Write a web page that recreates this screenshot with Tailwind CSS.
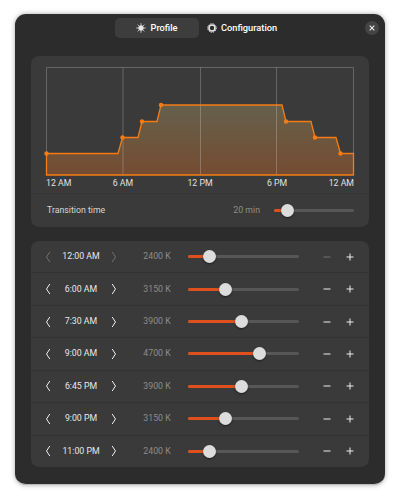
<!DOCTYPE html>
<html lang="en">
<head>
    <meta charset="UTF-8">
    <title>Profile</title>
    <script src="https://cdn.jsdelivr.net/npm/@tailwindcss/browser@4"></script>
</head>
<body class="bg-white w-[400px] h-[500px] overflow-hidden font-['Roboto',sans-serif]">
<div class="ml-[15px] mt-[14px] w-[370px] h-[471px] bg-[#2c2c2c] rounded-[11px] border-b border-[#bbb] shadow-[0_0_5px_rgba(0,0,0,0.35)] px-4 flex flex-col">

    <!-- header -->
    <div class="relative h-[42px] shrink-0 flex items-start justify-center pt-1 text-white text-[9.25px] font-medium">
        <div class="w-[84px] h-5 ml-[-1px] rounded-[5px] bg-[#3d3d3d] flex items-center justify-center gap-[4px]">
            <svg class="w-[10px] h-[10px]" viewBox="0 0 16 16" fill="none" stroke="#e8e8e8" stroke-width="1.4">
                <circle cx="8" cy="8" r="3.800" fill="#e8e8e8"/>
                <path d="M8 0.500v2.500M8 13v2.500M0.500 8h2.500M13 8h2.500M2.700 2.700l1.800 1.800M11.500 11.500l1.800 1.800M2.700 13.300l1.800-1.800M11.500 4.500l1.800-1.800"/>
            </svg>
            <span>Profile</span>
        </div>
        <div class="w-[84px] h-5 ml-[1px] flex items-center gap-[4px] pl-[7px] whitespace-nowrap">
            <svg class="w-[10px] h-[10px] shrink-0" viewBox="0 0 16 16" fill="none" stroke="#e8e8e8">
                <circle cx="8" cy="8" r="4.800" stroke-width="2.600"/>
                <circle cx="8" cy="8" r="6.900" stroke-width="1.600" stroke-dasharray="2 1.600"/>
            </svg>
            <span>Configuration</span>
        </div>
        <button class="absolute right-[-10px] top-[7px] w-[14px] h-[14px] rounded-full bg-[#444] flex items-center justify-center">
            <svg class="w-[6px] h-[6px]" viewBox="0 0 6 6" stroke="#eee" stroke-width="1.100"><path d="M0.700 0.700l4.600 4.600M5.300 0.700l-4.600 4.600"/></svg>
        </button>
    </div>

    <!-- chart card -->
    <div class="h-[171px] shrink-0 rounded-[8px] bg-[#3a3a3a] flex flex-col">
        <div class="px-[15px] pt-[11px] h-[138px] shrink-0 border-b border-[#353535]">
            <svg class="block w-[308px] h-[109px] overflow-visible" viewBox="46 67 308 109" fill="none">
                <defs>
                    <linearGradient id="fill" x1="0" y1="105" x2="0" y2="175" gradientUnits="userSpaceOnUse">
                        <stop offset="0" stop-color="#65604c"/>
                        <stop offset="1" stop-color="#754c31"/>
                    </linearGradient>
                </defs>
                <path d="M46.500 153.500H118L122.500 137.500H138L142 121.500H157L161 105H282L286 121.500H311L315 137.500H336L340.500 153.500H353.500V175H46.500Z" fill="url(#fill)"/>
                <path d="M46.500 67.500H353.500M46.500 67.500V175M123 67.500V175M200.500 67.500V175M276.500 67.500V175M353.500 67.500V175" stroke="#fff" stroke-opacity="0.22"/>
                <path d="M46.500 153.500H118L122.500 137.500H138L142 121.500H157L161 105H282L286 121.500H311L315 137.500H336L340.500 153.500H353.500V175H46.500Z" stroke="#f57c14" stroke-width="1.300"/>
                <g fill="#f57c14">
                    <circle cx="46.500" cy="153.500" r="2.200"/>
                    <circle cx="122.500" cy="137.500" r="2.200"/>
                    <circle cx="142" cy="121.500" r="2.200"/>
                    <circle cx="161" cy="105" r="2.200"/>
                    <circle cx="286" cy="121.500" r="2.200"/>
                    <circle cx="315" cy="137.500" r="2.200"/>
                    <circle cx="340.500" cy="153.500" r="2.200"/>
                </g>
            </svg>
            <div class="flex justify-between h-3 mt-[1px] text-[8.75px] leading-3 text-[#e0e0e0] whitespace-nowrap">
                <div class="w-0 flex justify-start"><span>12 AM</span></div>
                <div class="w-0 flex justify-center"><span>6 AM</span></div>
                <div class="w-0 flex justify-center"><span>12 PM</span></div>
                <div class="w-0 flex justify-center"><span>6 PM</span></div>
                <div class="w-0 flex justify-end"><span>12 AM</span></div>
            </div>
        </div>
        <div class="flex-1 flex items-center pl-4 pr-[15px] text-[8.75px]">
            <span class="text-[#d6d6d6]">Transition time</span>
            <span class="ml-auto mr-[14px] text-[#8c8c8c]">20 min</span>
            <div class="relative w-[80px] h-[3px] rounded-full bg-[#575757]">
                <div class="h-full rounded-full bg-[#e0501c] w-[14px]"></div>
                <div class="absolute left-[7px] top-[-5px] w-[13px] h-[13px] rounded-full bg-[#dcdcdc] shadow-[0_1px_2px_rgba(0,0,0,0.5)]"></div>
            </div>
        </div>
    </div>

    <!-- keyframe rows, filled in below -->
    <div id="rows" class="mt-[14px] h-[226px] shrink-0 rounded-[8px] bg-[#3a3a3a] flex flex-col divide-y divide-[#333]"></div>
</div>

<script>
    const rows = [
        { time: '12:00 AM', kelvin: '2400 K', thumb: 21, first: true },
        { time: '6:00 AM', kelvin: '3150 K', thumb: 37 },
        { time: '7:30 AM', kelvin: '3900 K', thumb: 53 },
        { time: '9:00 AM', kelvin: '4700 K', thumb: 71 },
        { time: '6:45 PM', kelvin: '3900 K', thumb: 53 },
        { time: '9:00 PM', kelvin: '3150 K', thumb: 37 },
        { time: '11:00 PM', kelvin: '2400 K', thumb: 21 },
    ];

    document.getElementById('rows').innerHTML = rows.map(function (row) {
        const off = row.first ? 'opacity-30' : '';
        return `
        <div class="flex-1 flex items-center text-[8.75px] pl-[14px]">
            <svg class="w-[6px] h-[12px] ${off}" viewBox="0 0 6 12" fill="none" stroke="#eee"><path d="M4.800 1L1.500 6L4.800 11"/></svg>
            <span class="w-[60px] text-center text-[#e8e8e8] whitespace-nowrap">${row.time}</span>
            <svg class="w-[6px] h-[12px] ${off}" viewBox="0 0 6 12" fill="none" stroke="#eee"><path d="M1.200 1L4.500 6L1.200 11"/></svg>
            <span class="w-[28px] ml-[26px] text-center text-[#8c8c8c] whitespace-nowrap">${row.kelvin}</span>
            <div class="relative w-[111px] h-[3px] ml-[17px] rounded-full bg-[#575757]">
                <div class="h-full rounded-full bg-[#e0501c]" style="width:${row.thumb}px"></div>
                <div class="absolute top-[-5px] ml-[-6.500px] w-[13px] h-[13px] rounded-full bg-[#dcdcdc] shadow-[0_1px_2px_rgba(0,0,0,0.5)]" style="left:${row.thumb}px"></div>
            </div>
            <svg class="w-[8px] h-[8px] ml-[24px] ${off}" viewBox="0 0 8 8" stroke="#eee"><path d="M0.500 4H7.500"/></svg>
            <svg class="w-[8px] h-[8px] ml-[15px]" viewBox="0 0 8 8" stroke="#eee"><path d="M0.500 4H7.500M4 0.500V7.500"/></svg>
        </div>`;
    }).join('');
</script>
</body>
</html>
